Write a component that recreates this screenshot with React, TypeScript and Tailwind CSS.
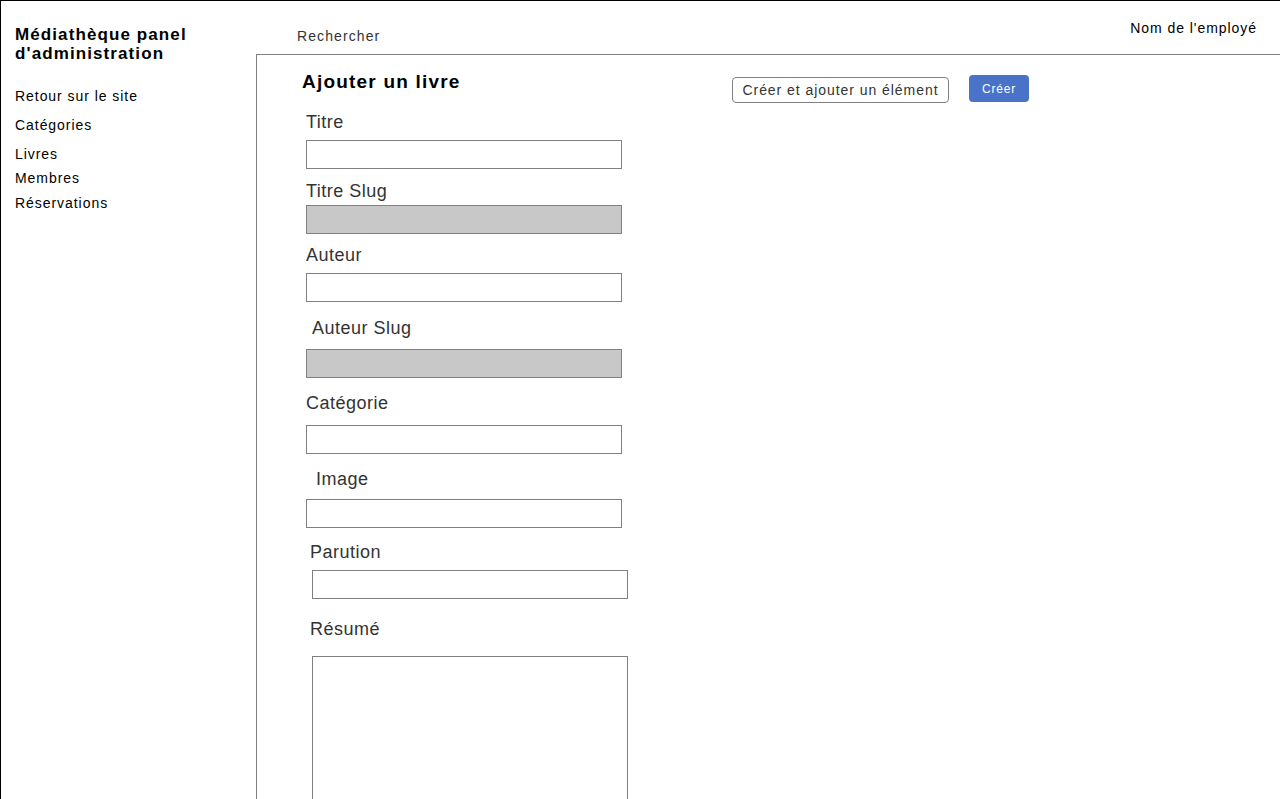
const fields = [
  { label: "Titre", lx: "ml-0", ix: "ml-0", lmt: "mt-0", imt: "mt-[8px]", gray: false },
  { label: "Titre Slug", lx: "ml-0", ix: "ml-0", lmt: "mt-[12px]", imt: "mt-[4px]", gray: true },
  { label: "Auteur", lx: "ml-0", ix: "ml-0", lmt: "mt-[11px]", imt: "mt-[8px]", gray: false },
  { label: "Auteur Slug", lx: "ml-[6px]", ix: "ml-0", lmt: "mt-[16px]", imt: "mt-[11px]", gray: true },
  { label: "Catégorie", lx: "ml-0", ix: "ml-0", lmt: "mt-[15px]", imt: "mt-[12px]", gray: false },
  { label: "Image", lx: "ml-[10px]", ix: "ml-0", lmt: "mt-[15px]", imt: "mt-[10px]", gray: false },
  { label: "Parution", lx: "ml-[4px]", ix: "ml-[6px]", lmt: "mt-[14px]", imt: "mt-[8px]", gray: false },
];

const links = [
  { name: "Retour sur le site", mt: "mt-[25px]" },
  { name: "Catégories", mt: "mt-[12px]" },
  { name: "Livres", mt: "mt-[12px]" },
  { name: "Membres", mt: "mt-[7px]" },
  { name: "Réservations", mt: "mt-[8px]" },
];

export default function App() {
  return (
    <div
      className="flex h-[799px] w-full overflow-hidden border-t border-l border-black bg-white text-black"
      style={{ fontFamily: '"Liberation Sans", Arial, sans-serif' }}
    >
      {/* sidebar */}
      <aside className="w-[255px] shrink-0 pt-[24px] pl-[14px]">
        <h1 className="text-[17px] leading-[19px] font-bold tracking-[1.1px]">
          Médiathèque panel
          <br />
          d'administration
        </h1>
        <nav className="flex flex-col">
          {links.map((l) => (
            <a key={l.name} className={`${l.mt} text-[14px] leading-[17px] tracking-[0.95px]`}>
              {l.name}
            </a>
          ))}
        </nav>
      </aside>

      <div className="flex min-w-0 flex-1 flex-col">
        {/* header */}
        <header className="flex h-[53px] shrink-0 items-start justify-between">
          <span className="mt-[27px] ml-[41px] text-[14px] leading-[17px] tracking-[1.1px] text-[#333]">
            Rechercher
          </span>
          <span className="mt-[19px] mr-[23px] text-[14px] leading-[17px] tracking-[0.95px]">
            Nom de l'employé
          </span>
        </header>

        {/* panel */}
        <main className="flex-1 border-t border-l border-[#808080]">
          <div className="flex h-[37px] items-start pt-[16px] pl-[45px]">
            <h2 className="w-[430px] shrink-0 text-[19px] leading-[22px] font-bold tracking-[1.2px]">
              Ajouter un livre
            </h2>
            <button className="mt-[6px] h-[26px] w-[217px] shrink-0 rounded-[4px] border border-[#808080] text-[14px] tracking-[0.95px] text-[#333]">
              Créer et ajouter un élément
            </button>
            <button className="mt-[4px] ml-[20px] h-[27px] w-[60px] shrink-0 rounded-[4px] bg-[#4a72c9] text-[12px] tracking-[0.8px] text-white">
              Créer
            </button>
          </div>

          <form className="flex flex-col items-start pt-[20px] pl-[49px]">
            {fields.map((f) => (
              <div key={f.label} className="flex flex-col items-start">
                <label className={`${f.lmt} ${f.lx} text-[18px] leading-[20px] tracking-[0.5px] text-[#333]`}>
                  {f.label}
                </label>
                <input
                  className={`${f.imt} ${f.ix} h-[29px] w-[316px] border border-[#808080] ${f.gray ? "bg-[#c8c8c8]" : "bg-white"}`}
                />
              </div>
            ))}
            <label className="mt-[20px] ml-[4px] text-[18px] leading-[20px] tracking-[0.5px] text-[#333]">
              Résumé
            </label>
            <textarea className="mt-[17px] ml-[6px] h-[200px] w-[316px] resize-none border border-[#808080]" />
          </form>
        </main>
      </div>
    </div>
  );
}
